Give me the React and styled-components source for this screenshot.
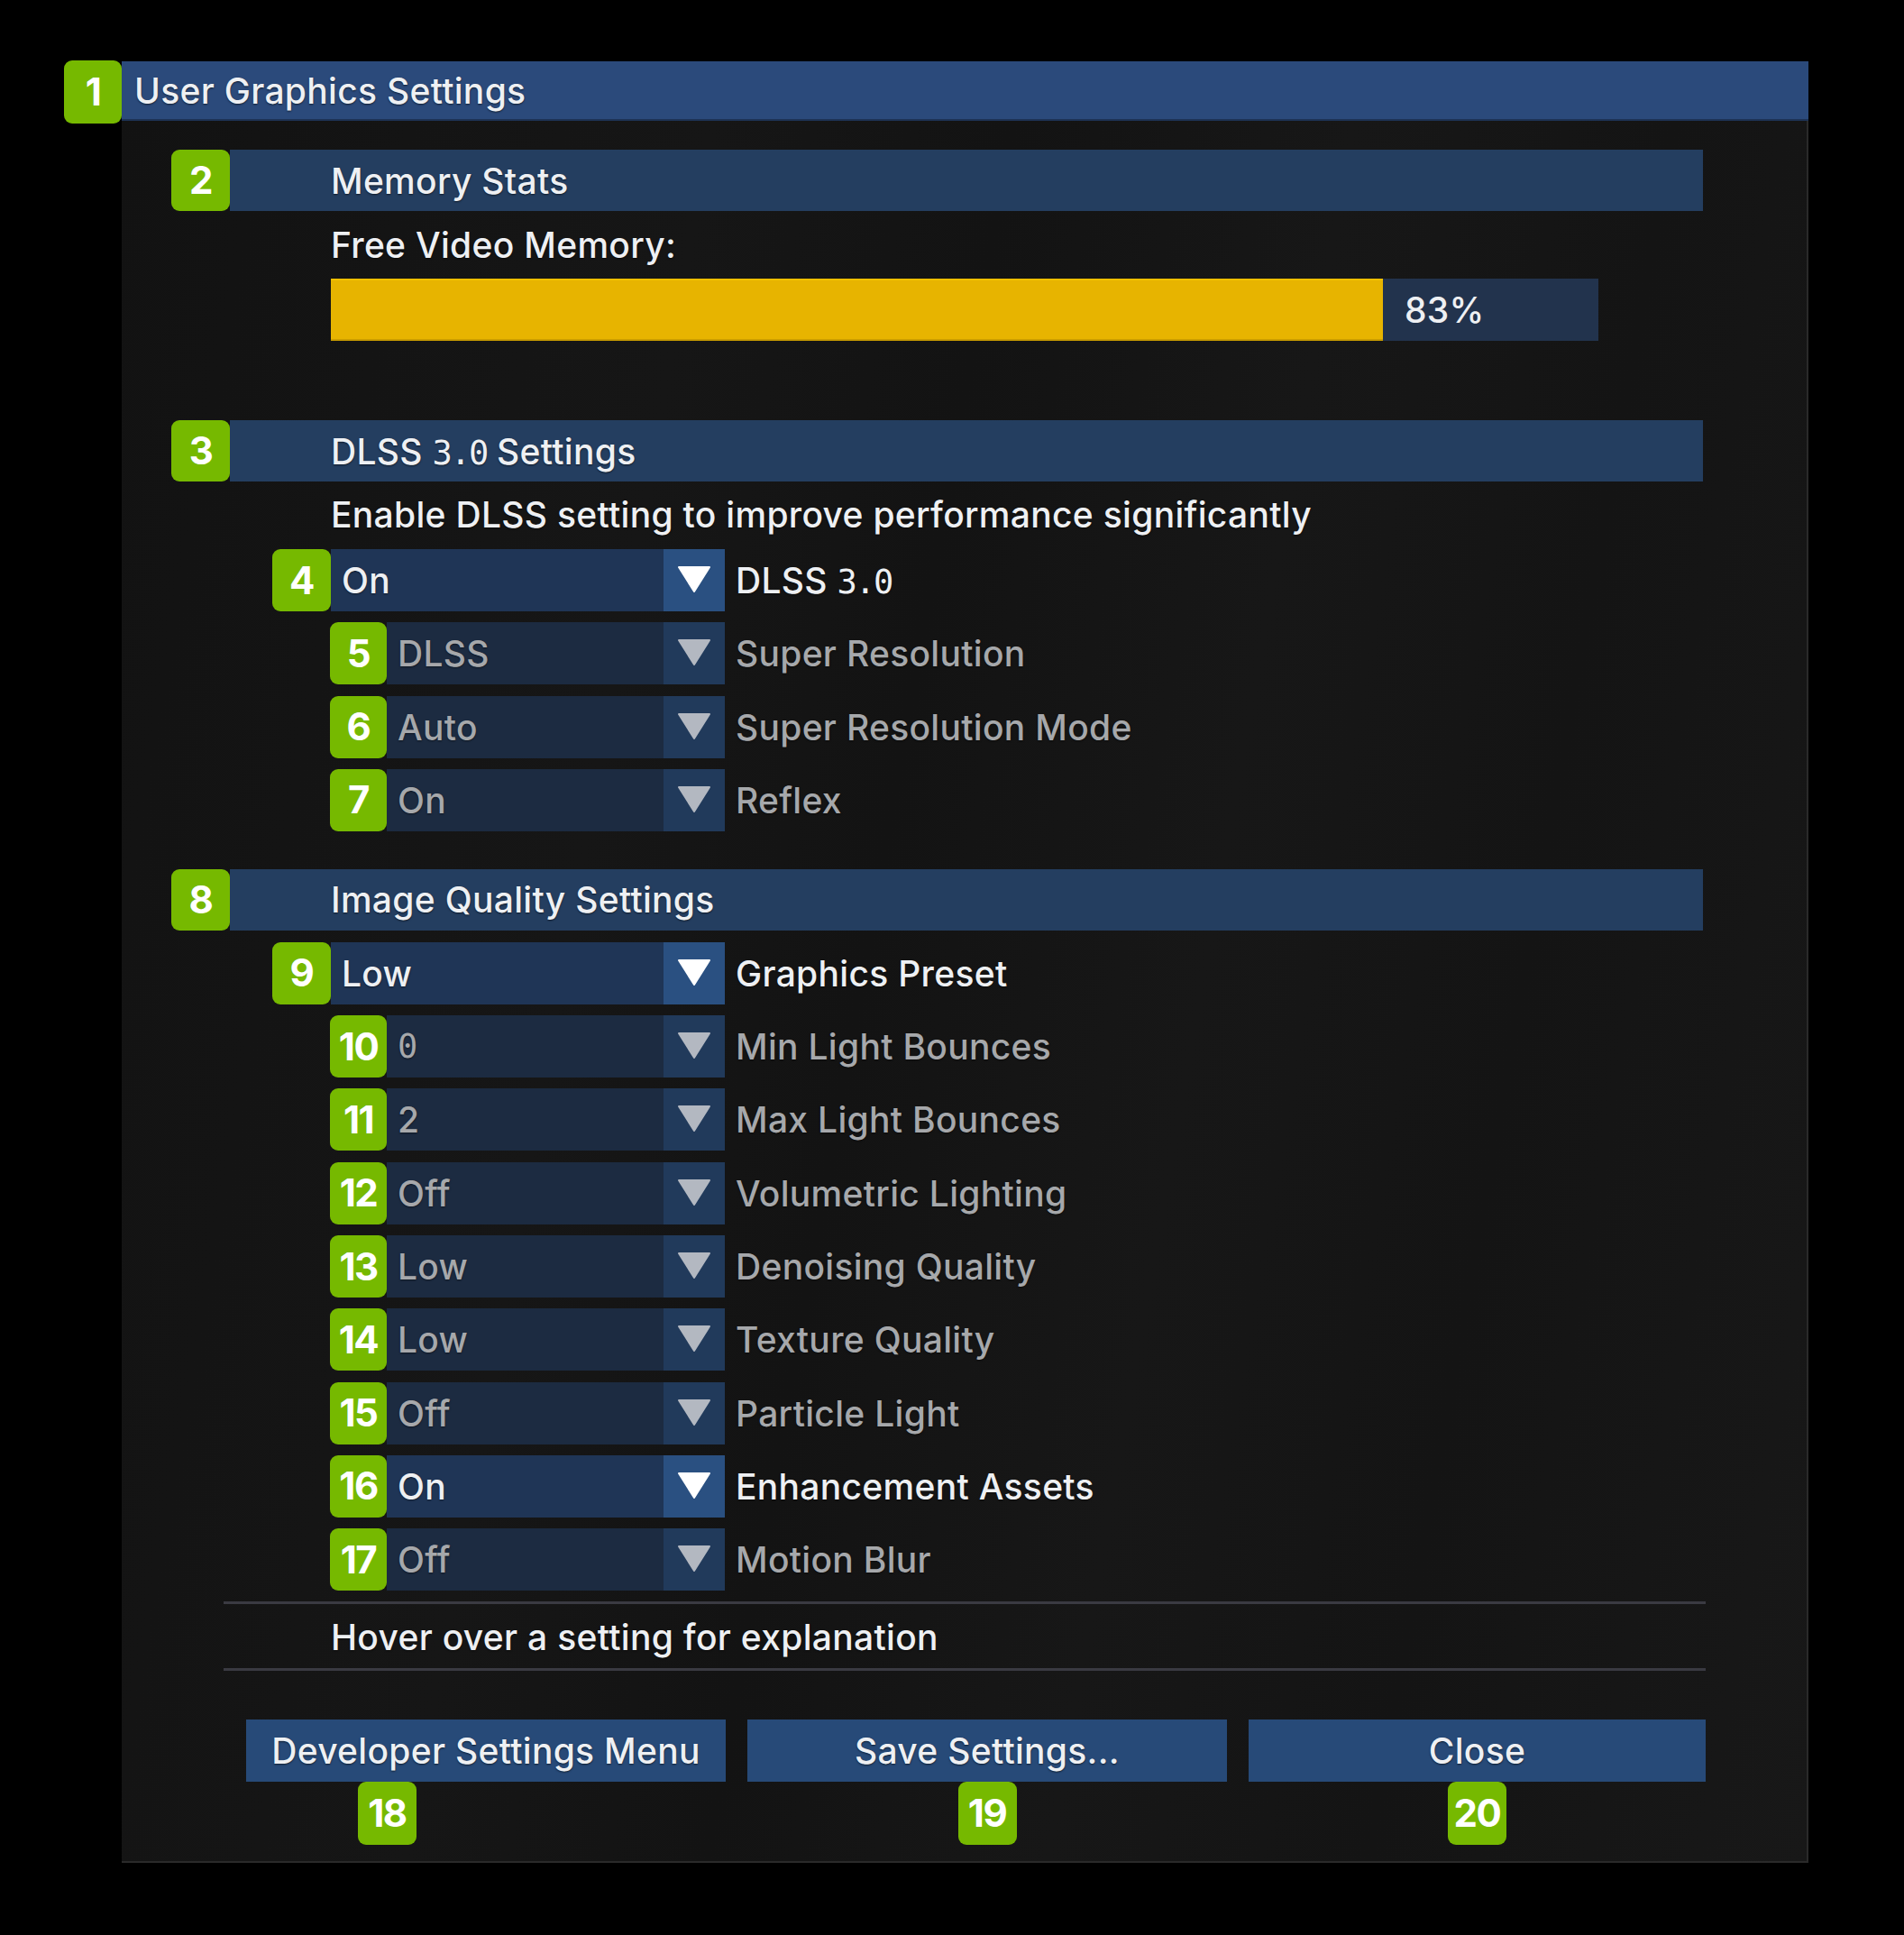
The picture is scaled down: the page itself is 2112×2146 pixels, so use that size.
import styled, { createGlobalStyle } from 'styled-components';

const GlobalStyle = createGlobalStyle`
    html, body {
        margin: 0;
        background: #000;
    }
    body {
        font-family: Inter, "Noto Sans", "Liberation Sans", sans-serif;
        -webkit-font-smoothing: antialiased;
    }
`;

const colors = {
    green: '#76b900',
    titleBar: '#2b4a7b',
    sectionBar: '#243e60',
    button: '#274a78',
    text: '#eef0f3',
    muted: '#a6a8ab',
    fieldOn: '#1f3556',
    fieldOff: '#1c2b41',
    arrowOn: '#2a5081',
    arrowOff: '#213a5b',
    yellow: '#e7b400',
    track: '#22334d',
    divider: '#3a3a42',
};

const fontSize = '39px';
const tracking = '0.3px';

const Page = styled.div`
    display: grid;
    grid-template-columns: 64px 1871px;
    align-items: start;
    padding: 67px 0 0 71px;
    min-height: 2146px;
    box-sizing: border-box;
    background: #000;
`;

const Badge = styled.div`
    display: flex;
    align-items: center;
    justify-content: center;
    flex: none;
    width: ${({ $w }) => $w || 64}px;
    height: ${({ $h }) => $h || 69}px;
    background: ${colors.green};
    border-radius: 9px;
    color: #fff;
    font-family: Inter, "Liberation Sans", sans-serif;
    font-weight: 700;
    font-size: 42px;
    letter-spacing: -1.5px;
    line-height: 1;
`;

const Panel = styled.div`
    margin-top: 1px;
    display: flex;
    flex-direction: column;
    background: linear-gradient(
        100deg,
        #121212 0%,
        #161616 30%,
        #131313 45%,
        #171717 62%,
        #141414 78%,
        #181818 100%
    );
    box-shadow: inset -2px -2px 0 #2a2a2a;
`;

const TitleBar = styled.div`
    height: 66px;
    display: flex;
    align-items: center;
    padding-left: 14px;
    background: ${colors.titleBar};
    border-bottom: 2px solid #1d3356;
    box-sizing: border-box;
    color: ${colors.text};
    font-size: ${fontSize};
    letter-spacing: ${tracking};
    font-weight: 500;
    text-shadow: 0 1px 2px rgba(0, 0, 0, 0.6);
`;

const Content = styled.div`
    display: flex;
    flex-direction: column;
    padding: 32px 117px 20px 55px;
`;

const SectionHeader = styled.div`
    display: flex;
    height: 68px;
    margin-top: ${({ $top }) => $top || 0}px;
`;

const SectionBar = styled.div`
    flex: 1;
    display: flex;
    align-items: center;
    padding-left: 112px;
    background: ${colors.sectionBar};
    color: ${colors.text};
    font-size: ${fontSize};
    letter-spacing: ${tracking};
    font-weight: 500;
    white-space: pre;
    text-shadow: 0 1px 2px rgba(0, 0, 0, 0.6);
`;

const Text = styled.div`
    margin: ${({ $top }) => $top}px 0 0 177px;
    line-height: 44px;
    color: ${colors.text};
    font-size: ${fontSize};
    letter-spacing: ${tracking};
    font-weight: 500;
    white-space: nowrap;
    text-shadow: 0 1px 2px rgba(0, 0, 0, 0.6);
`;

const Mono = styled.span`
    font-family: "DejaVu Sans Mono", "Liberation Mono", monospace;
    font-size: 0.95em;
    font-weight: 400;
    letter-spacing: -2px;
`;

const MemoryBar = styled.div`
    display: flex;
    width: 1406px;
    height: 69px;
    margin: 15px 0 0 177px;
    background: ${colors.track};
`;

const MemoryFill = styled.div`
    height: 100%;
    background: ${colors.yellow};
    box-shadow: inset 0 2px 0 #f0c000, inset 0 -2px 0 #c99c00;
`;

const MemoryValue = styled.div`
    display: flex;
    align-items: center;
    padding-left: 24px;
    color: ${colors.text};
    font-size: ${fontSize};
    letter-spacing: ${tracking};
    font-weight: 500;
`;

const Rows = styled.div`
    display: flex;
    flex-direction: column;
    gap: 12.3px;
    margin-top: ${({ $top }) => $top}px;
`;

const Row = styled.div`
    display: flex;
    align-items: center;
    height: 69px;
    padding-left: ${({ $primary }) => ($primary ? 112 : 176)}px;
`;

const Field = styled.div`
    display: flex;
    width: ${({ $primary }) => ($primary ? 437 : 375)}px;
    height: 100%;
    background: ${({ $active }) => ($active ? colors.fieldOn : colors.fieldOff)};
`;

const FieldValue = styled.div`
    flex: 1;
    display: flex;
    align-items: center;
    padding-left: 12px;
    color: ${({ $active }) => ($active ? colors.text : colors.muted)};
    font-size: ${fontSize};
    letter-spacing: ${tracking};
    font-weight: 500;
    text-shadow: 0 1px 2px rgba(0, 0, 0, 0.5);
`;

const ArrowBox = styled.div`
    width: 68px;
    display: flex;
    align-items: center;
    justify-content: center;
    padding-bottom: 2px;
    box-sizing: border-box;
    background: ${({ $active }) => ($active ? colors.arrowOn : colors.arrowOff)};
`;

const RowLabel = styled.div`
    margin-left: 12px;
    color: ${({ $active }) => ($active ? colors.text : colors.muted)};
    font-size: ${fontSize};
    letter-spacing: ${tracking};
    font-weight: 500;
    white-space: nowrap;
    text-shadow: 0 1px 2px rgba(0, 0, 0, 0.5);
`;

const Divider = styled.div`
    height: 3px;
    margin: ${({ $top }) => $top}px -3px 0 58px;
    background: ${colors.divider};
`;

const Buttons = styled.div`
    display: grid;
    grid-template-columns: 532px 532px 1fr;
    gap: 24px;
    margin: 54px -3px 0 83px;
`;

const ButtonSlot = styled.div`
    display: flex;
    flex-direction: column;
    align-items: ${({ $offset }) => ($offset ? 'flex-start' : 'center')};

    ${Badge} {
        margin-left: ${({ $offset }) => $offset || 0}px;
        height: 70px;
        width: 65px;
    }
`;

const Button = styled.div`
    align-self: stretch;
    height: 69px;
    display: flex;
    align-items: center;
    justify-content: center;
    background: ${colors.button};
    color: ${colors.text};
    font-size: ${fontSize};
    letter-spacing: ${tracking};
    font-weight: 500;
    text-shadow: 0 1px 2px rgba(0, 0, 0, 0.6);
`;

function Arrow({ active }) {
    const fill = active ? '#ffffff' : '#b3b8c1';
    return (
        <svg width="36" height="29" viewBox="0 0 36 29">
            <polygon
                points="1,1 35,1 18,28"
                fill={fill}
                stroke={fill}
                strokeWidth="2"
                strokeLinejoin="round"
            />
        </svg>
    );
}

const dlss = (
    <span>
        DLSS <Mono>3.0</Mono>
    </span>
);

const dlssRows = [
    { n: 4, value: 'On', label: dlss, primary: true, active: true },
    { n: 5, value: 'DLSS', label: 'Super Resolution' },
    { n: 6, value: 'Auto', label: 'Super Resolution Mode' },
    { n: 7, value: 'On', label: 'Reflex' },
];

const qualityRows = [
    { n: 9, value: 'Low', label: 'Graphics Preset', primary: true, active: true },
    { n: 10, value: <Mono>0</Mono>, label: 'Min Light Bounces' },
    { n: 11, value: '2', label: 'Max Light Bounces' },
    { n: 12, value: 'Off', label: 'Volumetric Lighting' },
    { n: 13, value: 'Low', label: 'Denoising Quality' },
    { n: 14, value: 'Low', label: 'Texture Quality' },
    { n: 15, value: 'Off', label: 'Particle Light' },
    { n: 16, value: 'On', label: 'Enhancement Assets', active: true },
    { n: 17, value: 'Off', label: 'Motion Blur' },
];

function SettingRow({ n, value, label, primary, active }) {
    return (
        <Row $primary={primary}>
            <Badge $w={primary ? 65 : 63}>{n}</Badge>
            <Field $primary={primary} $active={active}>
                <FieldValue $active={active}>{value}</FieldValue>
                <ArrowBox $active={active}>
                    <Arrow active={active} />
                </ArrowBox>
            </Field>
            <RowLabel $active={active}>{label}</RowLabel>
        </Row>
    );
}

function App() {
    const freeMemory = 83;

    return (
        <>
            <GlobalStyle />
            <Page>
                <Badge $h={70}>1</Badge>
                <Panel>
                    <TitleBar>User Graphics Settings</TitleBar>
                    <Content>
                        <SectionHeader>
                            <Badge $w={65} $h={68}>2</Badge>
                            <SectionBar>Memory Stats</SectionBar>
                        </SectionHeader>
                        <Text $top={16}>Free Video Memory:</Text>
                        <MemoryBar>
                            <MemoryFill style={{ width: `${freeMemory}%` }} />
                            <MemoryValue>{freeMemory}%</MemoryValue>
                        </MemoryBar>

                        <SectionHeader $top={88}>
                            <Badge $w={65} $h={68}>3</Badge>
                            <SectionBar>{dlss} Settings</SectionBar>
                        </SectionHeader>
                        <Text $top={15}>
                            Enable DLSS setting to improve performance significantly
                        </Text>
                        <Rows $top={16}>
                            {dlssRows.map((r) => (
                                <SettingRow key={r.n} {...r} />
                            ))}
                        </Rows>

                        <SectionHeader $top={42}>
                            <Badge $w={65} $h={68}>8</Badge>
                            <SectionBar>Image Quality Settings</SectionBar>
                        </SectionHeader>
                        <Rows $top={13}>
                            {qualityRows.map((r) => (
                                <SettingRow key={r.n} {...r} />
                            ))}
                        </Rows>

                        <Divider $top={12} />
                        <Text $top={15}>Hover over a setting for explanation</Text>
                        <Divider $top={12} />

                        <Buttons>
                            <ButtonSlot $offset={124}>
                                <Button>Developer Settings Menu</Button>
                                <Badge>18</Badge>
                            </ButtonSlot>
                            <ButtonSlot>
                                <Button>Save Settings...</Button>
                                <Badge>19</Badge>
                            </ButtonSlot>
                            <ButtonSlot>
                                <Button>Close</Button>
                                <Badge>20</Badge>
                            </ButtonSlot>
                        </Buttons>
                    </Content>
                </Panel>
            </Page>
        </>
    );
}

export default App;
